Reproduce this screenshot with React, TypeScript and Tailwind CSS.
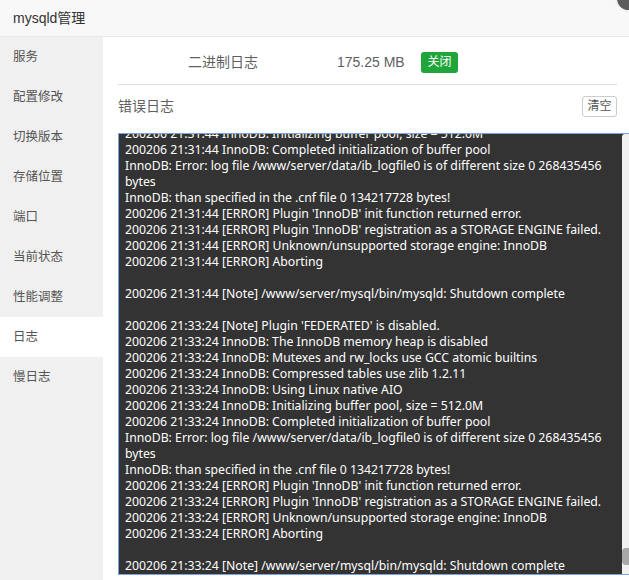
const menu = ["服务", "配置修改", "切换版本", "存储位置", "端口", "当前状态", "性能调整", "日志", "慢日志"];

const logLines = [
  "200206 21:31:44 InnoDB: Initializing buffer pool, size = 512.0M",
  "200206 21:31:44 InnoDB: Completed initialization of buffer pool",
  "InnoDB: Error: log file /www/server/data/ib_logfile0 is of different size 0 268435456",
  "bytes",
  "InnoDB: than specified in the .cnf file 0 134217728 bytes!",
  "200206 21:31:44 [ERROR] Plugin 'InnoDB' init function returned error.",
  "200206 21:31:44 [ERROR] Plugin 'InnoDB' registration as a STORAGE ENGINE failed.",
  "200206 21:31:44 [ERROR] Unknown/unsupported storage engine: InnoDB",
  "200206 21:31:44 [ERROR] Aborting",
  "",
  "200206 21:31:44 [Note] /www/server/mysql/bin/mysqld: Shutdown complete",
  "",
  "200206 21:33:24 [Note] Plugin 'FEDERATED' is disabled.",
  "200206 21:33:24 InnoDB: The InnoDB memory heap is disabled",
  "200206 21:33:24 InnoDB: Mutexes and rw_locks use GCC atomic builtins",
  "200206 21:33:24 InnoDB: Compressed tables use zlib 1.2.11",
  "200206 21:33:24 InnoDB: Using Linux native AIO",
  "200206 21:33:24 InnoDB: Initializing buffer pool, size = 512.0M",
  "200206 21:33:24 InnoDB: Completed initialization of buffer pool",
  "InnoDB: Error: log file /www/server/data/ib_logfile0 is of different size 0 268435456",
  "bytes",
  "InnoDB: than specified in the .cnf file 0 134217728 bytes!",
  "200206 21:33:24 [ERROR] Plugin 'InnoDB' init function returned error.",
  "200206 21:33:24 [ERROR] Plugin 'InnoDB' registration as a STORAGE ENGINE failed.",
  "200206 21:33:24 [ERROR] Unknown/unsupported storage engine: InnoDB",
  "200206 21:33:24 [ERROR] Aborting",
  "",
  "200206 21:33:24 [Note] /www/server/mysql/bin/mysqld: Shutdown complete",
];

export default function App() {
  return (
    <div
      className="relative w-[629px] h-[580px] overflow-hidden bg-white flex flex-col"
      style={{ fontFamily: '"Liberation Sans", "Noto Sans CJK SC", sans-serif' }}
    >
      {/* Title bar */}
      <div className="h-[37px] shrink-0 bg-[#f8f8f8] border-b border-[#e8e8e8] flex items-center pl-[13px]">
        <span className="text-[14px] text-[#333]">mysqld管理</span>
      </div>
      {/* Close button (cut off) */}
      <div className="absolute top-[-15px] left-[615px] w-[27px] h-[27px] rounded-full bg-[#5c5c5c] border-2 border-[#f0f0f0]" />

      <div className="flex flex-1 min-h-0">
        {/* Sidebar */}
        <div className="w-[103px] shrink-0 bg-[#f0f0f0]">
          {menu.map((item) => (
            <div
              key={item}
              className={`h-[40px] flex items-center pl-[13px] text-[12.5px] text-[#555] ${
                item === "日志" ? "bg-white" : ""
              }`}
            >
              {item}
            </div>
          ))}
        </div>

        {/* Content */}
        <div className="flex-1 min-w-0 flex flex-col pl-[15px]">
          <div className="mr-[12px] pt-[15px] pb-[11px] border-b border-[#dddddd] flex items-center text-[14px] text-[#5f5f5f]">
            <span className="ml-[70px] w-[149px]">二进制日志</span>
            <span className="w-[84px]">175.25 MB</span>
            <button className="h-[21px] w-[37px] rounded-[3px] bg-[#20a53a] text-white text-[12px] leading-[21px]">
              关闭
            </button>
          </div>

          <div className="mr-[12px] pt-[11px] flex items-center justify-between">
            <span className="text-[14px] text-[#5f5f5f]">错误日志</span>
            <button className="h-[21px] w-[35px] rounded-[3px] border border-[#cccccc] bg-white text-[12px] text-[#555] leading-[19px]">
              清空
            </button>
          </div>

          {/* Log textarea */}
          <div className="mt-[16px] h-[442px] flex border-l border-t border-b border-[#7fa2e0] bg-[#333333]">
            <div className="flex-1 min-w-0 overflow-hidden pl-[6px]">
              <div
                className="-mt-[8px] text-[12.25px] text-white"
                style={{ fontFamily: '"Noto Sans", "Noto Sans CJK SC", sans-serif' }}
              >
                {logLines.map((line, i) => (
                  <div key={i} className="h-[16px] leading-[16px] whitespace-pre">
                    {line}
                  </div>
                ))}
              </div>
            </div>
            {/* Scrollbar */}
            <div className="w-[7px] shrink-0 bg-[#f1f1f1] rounded-tl-[3px] flex flex-col justify-end pb-[9px]">
              <div className="h-[17px] bg-[#a8a8a8] rounded-l-[4px]" />
            </div>
          </div>
        </div>
      </div>
    </div>
  );
}
